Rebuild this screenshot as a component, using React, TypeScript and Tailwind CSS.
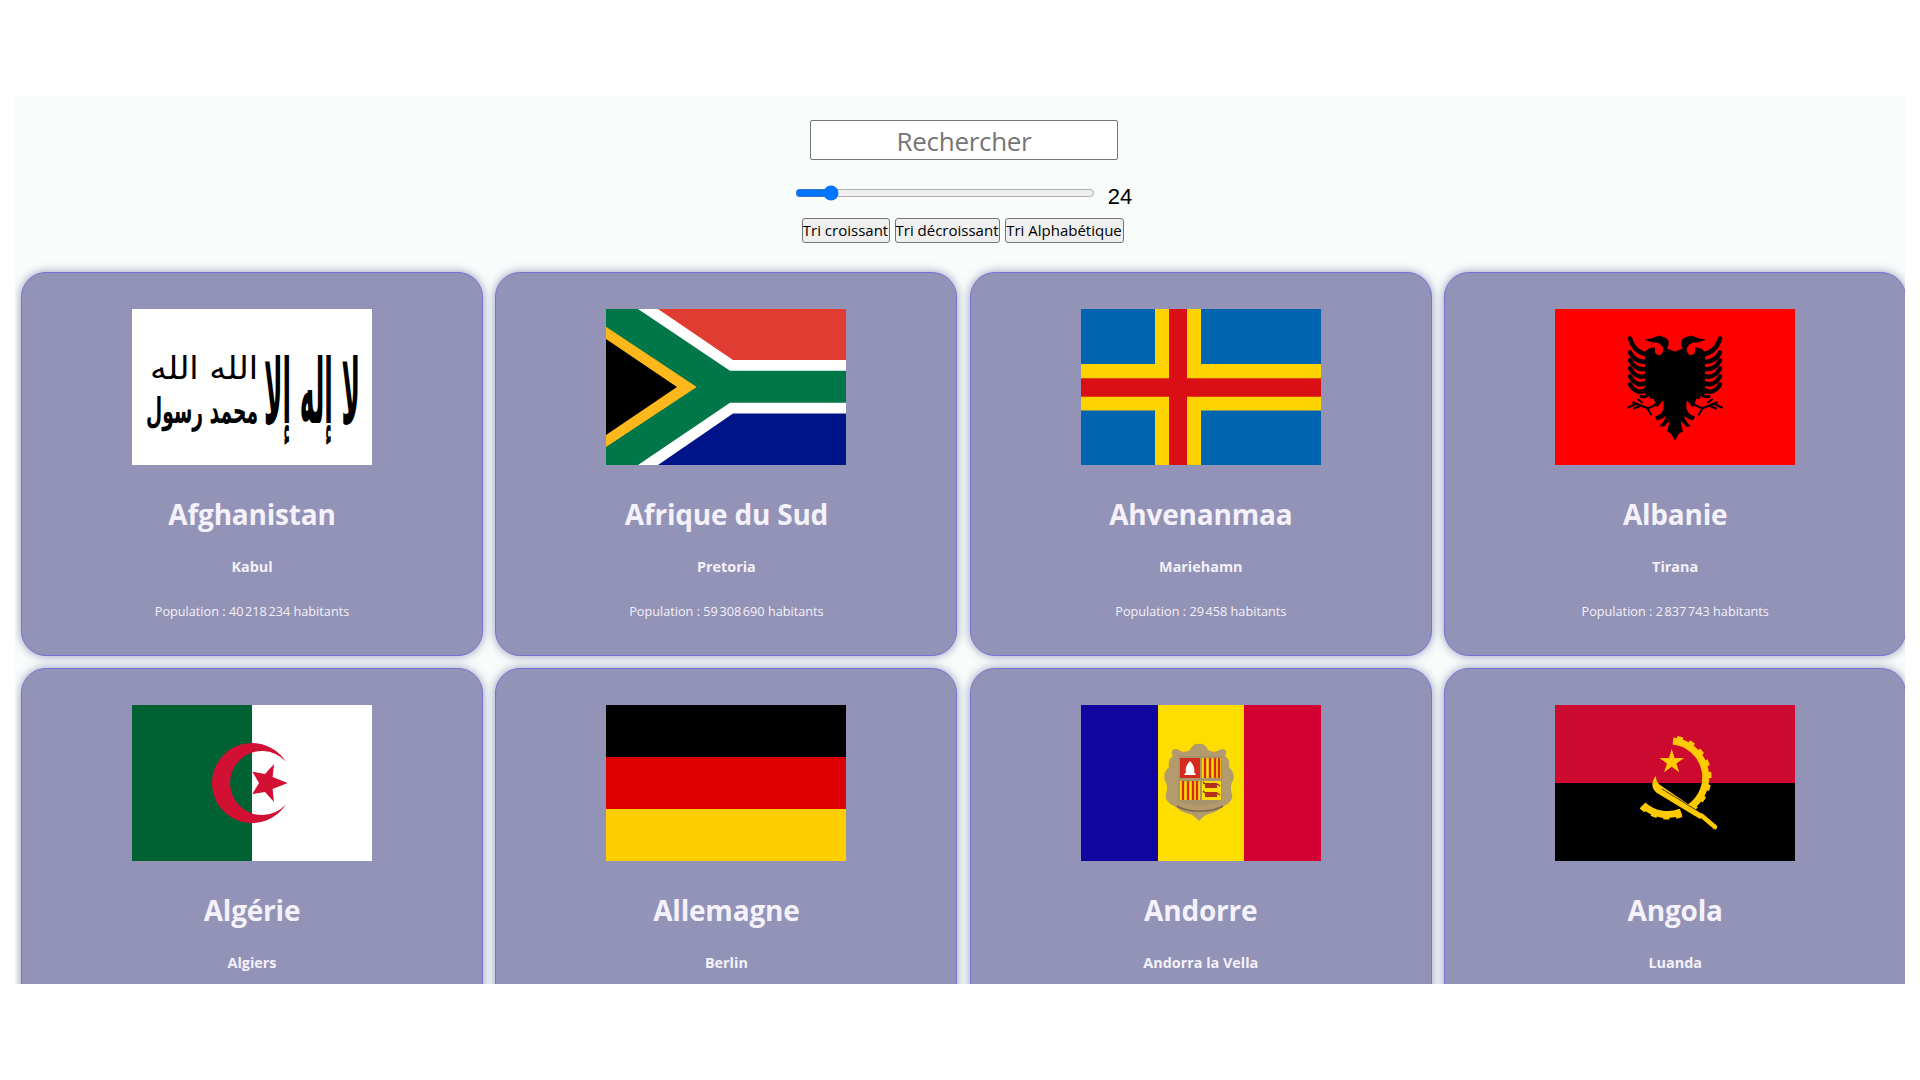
import { ReactNode } from 'react';

const FlagAfghanistan = () => (
  <svg viewBox="0 0 240 156" className="block w-full h-full">
    <rect width="240" height="156" fill="#fff" />
    <g fontFamily="'DejaVu Sans', sans-serif" fill="#000" textAnchor="middle">
      <g transform="translate(180 114) scale(1 3)">
        <text x="0" y="0" textLength="96" lengthAdjust="spacingAndGlyphs" fontWeight="700" fontSize="30">
          لا إله إلا
        </text>
      </g>
      <g transform="translate(72 70) scale(1 1.6)">
        <text x="0" y="0" textLength="108" lengthAdjust="spacingAndGlyphs" fontSize="20">
          الله الله
        </text>
      </g>
      <g transform="translate(70 114) scale(1 1.35)">
        <text x="0" y="0" textLength="112" lengthAdjust="spacingAndGlyphs" fontWeight="700" fontSize="26">
          محمد رسول
        </text>
      </g>
    </g>
  </svg>
);

const FlagSouthAfrica = () => (
  <svg viewBox="0 0 240 156" className="block w-full h-full">
    <rect width="240" height="78" fill="#e03c31" />
    <rect y="78" width="240" height="78" fill="#001489" />
    <polygon points="32,0 52,0 127,51 240,51 240,104.5 127,104.5 52,156 32,156" fill="#fff" />
    <polygon points="0,0 32,0 124,61.7 240,61.7 240,93.7 124,93.7 32,156 0,156" fill="#007749" />
    <polygon points="0,17.7 90.7,78 0,138" fill="#ffb81c" />
    <polygon points="0,30 71,78 0,126" fill="#000" />
  </svg>
);

const FlagAland = () => (
  <svg viewBox="0 0 240 156" className="block w-full h-full">
    <rect width="240" height="156" fill="#0064ae" />
    <rect x="74" width="46" height="156" fill="#ffd300" />
    <rect y="55" width="240" height="46.5" fill="#ffd300" />
    <rect x="88" width="18" height="156" fill="#da0e15" />
    <rect y="69.3" width="240" height="18.4" fill="#da0e15" />
  </svg>
);

// one half of the eagle, mirrored around x=0
const EagleHalf = () => (
  <g>
    <path d="M0 41 L8 38 C5 33 6 29 10 27 L16 25 L24 28 L31 29 L23 32 L18 32 C14 34 11 36 12 41 C13 45 17 46 20 42 L20 37 C24 37 28 38 30 42 L30 84 L22 87 L18 97 L12 90 C10 98 12 104 20 106 L18 110 C14 109 11 107 9 105 C10 110 13 113 16 116 L11 116 C9 114 7 112 6 110 C6 115 7 118 8 121 L4 123 L0 130 Z" fill="#000" />
    <path d="M27 44 C36 43 42 38 45 28" fill="none" stroke="#000" strokeWidth="4.5" strokeLinecap="round" />
    <path d="M28 51 C35 52 41 50 45 42" fill="none" stroke="#000" strokeWidth="4.5" strokeLinecap="round" />
    <path d="M28 58 C35 60 41 57 45 50" fill="none" stroke="#000" strokeWidth="4.5" strokeLinecap="round" />
    <path d="M28 65 C35 68 41 65 45 58" fill="none" stroke="#000" strokeWidth="4.5" strokeLinecap="round" />
    <path d="M28 72 C35 76 41 73 45 66" fill="none" stroke="#000" strokeWidth="4.5" strokeLinecap="round" />
    <path d="M28 78 C34 84 41 81 45 74" fill="none" stroke="#000" strokeWidth="4.5" strokeLinecap="round" />
    <path d="M25 81 C26 85 28 87 34 86" fill="none" stroke="#000" strokeWidth="3" strokeLinecap="round" />
    <path d="M17 79 C17 84 19 86 24 87" fill="none" stroke="#000" strokeWidth="3" strokeLinecap="round" />
    <path d="M17 93 L27 98 L42 92 M33 92 L37 89 M34 95 L41 98 M28 97 L24 104 M38 93 L47 97" fill="none" stroke="#000" strokeWidth="2" strokeLinecap="round" />
  </g>
);

const FlagAlbania = () => (
  <svg viewBox="0 0 240 156" className="block w-full h-full">
    <rect width="240" height="156" fill="#ff0000" />
    <g transform="translate(120 1.5)">
      <EagleHalf />
      <g transform="scale(-1 1)">
        <EagleHalf />
      </g>
    </g>
  </svg>
);

const FlagAlgeria = () => (
  <svg viewBox="0 0 240 156" className="block w-full h-full">
    <rect width="120" height="156" fill="#006233" />
    <rect x="120" width="120" height="156" fill="#fff" />
    <path d="M153.8 56.6 A40 40 0 1 0 153.8 99.4 A32 32 0 1 1 153.8 56.6 Z" fill="#d21034" />
    <polygon points="155.7,78 140.6,84 142,97 133,87 120.3,89 127,78 120.3,66.7 133,69 142,59 140.6,72" fill="#d21034" />
  </svg>
);

const FlagGermany = () => (
  <svg viewBox="0 0 240 156" className="block w-full h-full">
    <rect width="240" height="52" fill="#000" />
    <rect y="52" width="240" height="52" fill="#dd0000" />
    <rect y="104" width="240" height="52" fill="#ffce00" />
  </svg>
);

const FlagAndorra = () => (
  <svg viewBox="0 0 240 156" className="block w-full h-full">
    <rect width="77" height="156" fill="#10069f" />
    <rect x="77" width="86" height="156" fill="#fedd00" />
    <rect x="163" width="77" height="156" fill="#d50032" />
    {/* cartouche round the shield */}
    <path transform="translate(118 77) scale(1.07 1) translate(-118 -77)" d="M94 51 C90 46 95 42 99 45 C103 48 108 47 110 44 C112 40 115 38 118 39 C121 38 124 40 126 44 C128 47 133 48 137 45 C141 42 146 46 142 51 C146 53 147 58 146 62 C150 66 152 72 149 77 C147 81 148 86 149 90 C150 95 145 100 141 101 C137 105 131 108 127 109 C123 110 121 113 118 116 C115 113 113 110 109 109 C105 108 99 105 95 101 C91 100 86 95 87 90 C88 86 89 81 87 77 C84 72 86 66 90 62 C89 58 90 53 94 51 Z" fill="#b39b6d" />
    <path d="M97 51 H141 V92 C141 97 135 99 130 99 L119 102 L107 99 C102 99 97 97 97 92 Z" fill="#a8946a" />
    <rect x="99" y="53" width="20" height="20" fill="#d52b1e" />
    <path d="M109 56 C105 60 104 65 105 67 L103 70 H115 L113 67 C114 65 113 60 109 56 Z" fill="#fff" />
    <rect x="121" y="53" width="19" height="20" fill="#fedd00" />
    <path d="M124 53 V73 M129 53 V73 M134 53 V73 M138 53 V73" stroke="#d52b1e" strokeWidth="2.4" />
    <rect x="99" y="76" width="20" height="19" fill="#fedd00" />
    <path d="M102 76 V95 M107 76 V95 M112 76 V95 M116 76 V95" stroke="#d52b1e" strokeWidth="2.4" />
    <rect x="121" y="76" width="19" height="19" fill="#fedd00" />
    <rect x="124" y="78" width="12" height="5" fill="#b5301f" />
    <rect x="124" y="87" width="12" height="5" fill="#b5301f" />
    <path d="M122 77 L124 79 M136 79 L139 81 M122 86 L124 88 M136 88 L139 90" stroke="#7a3a20" strokeWidth="1.4" />
    <path d="M96 101 C106 108 131 108 142 101" fill="none" stroke="#7d6c4c" strokeWidth="1.6" />
  </svg>
);

const FlagAngola = () => (
  <svg viewBox="0 0 240 156" className="block w-full h-full">
    <rect width="240" height="78" fill="#cc092f" />
    <rect y="78" width="240" height="78" fill="#000" />
    <path d="M118 36 A36.5 36.5 0 0 1 134 103" fill="none" stroke="#ffcb00" strokeWidth="7" />
    <path d="M122 33 A39.5 39.5 0 0 1 134 106.5" fill="none" stroke="#ffcb00" strokeWidth="4" strokeDasharray="6 6.5" />
    <path d="M88 100 A36.5 36.5 0 0 0 126 107" fill="none" stroke="#ffcb00" strokeWidth="7" />
    <path d="M86 102 A39.5 39.5 0 0 0 127 110" fill="none" stroke="#ffcb00" strokeWidth="4" strokeDasharray="6 6.5" />
    <polygon points="116.7,44 119.6,52.9 129,52.9 121.4,58.4 124.3,67.3 116.7,61.8 109.1,67.3 112,58.4 104.4,52.9 114,52.9" fill="#ffcb00" />
    <path d="M101 71 C96 76 96 84 102 88 L145 114 L149 110 L108 82 C103 79 101 76 101 71 Z" fill="#ffcb00" />
    <path d="M107 84 L146 108" stroke="#000" strokeWidth="0.7" />
    <path d="M147 111 L160 122" stroke="#ffcb00" strokeWidth="4.5" strokeLinecap="round" />
  </svg>
);

interface Country {
  name: string;
  capital: string;
  population: string;
  flag: ReactNode;
}

const countries: Country[] = [
  { name: 'Afghanistan', capital: 'Kabul', population: '40\u202f218\u202f234', flag: <FlagAfghanistan /> },
  { name: 'Afrique du Sud', capital: 'Pretoria', population: '59\u202f308\u202f690', flag: <FlagSouthAfrica /> },
  { name: 'Ahvenanmaa', capital: 'Mariehamn', population: '29\u202f458', flag: <FlagAland /> },
  { name: 'Albanie', capital: 'Tirana', population: '2\u202f837\u202f743', flag: <FlagAlbania /> },
  { name: 'Algérie', capital: 'Algiers', population: '44\u202f700\u202f000', flag: <FlagAlgeria /> },
  { name: 'Allemagne', capital: 'Berlin', population: '83\u202f240\u202f525', flag: <FlagGermany /> },
  { name: 'Andorre', capital: 'Andorra la Vella', population: '77\u202f265', flag: <FlagAndorra /> },
  { name: 'Angola', capital: 'Luanda', population: '32\u202f866\u202f268', flag: <FlagAngola /> },
];

function Card({ country }: { country: Country }) {
  return (
    <li className="flex h-[384px] flex-col items-center rounded-[25px] border border-[#7474d6] bg-[#9293b6] pt-[36px] text-[#f5f1fb] shadow-[0_0_10px_rgba(70,70,130,0.55)]">
      <div className="h-[156px] w-[240px]">{country.flag}</div>
      <h2 className="mt-[30px] text-[28px] leading-[38px] font-bold tracking-[-0.2px]">{country.name}</h2>
      <h3 className="mt-[23px] text-[14.4px] leading-[22px] font-bold">{country.capital}</h3>
      <p className="mt-[23px] text-[12.7px] leading-[20px]">Population : {country.population} habitants</p>
    </li>
  );
}

export default function App() {
  return (
    <div className="min-h-[1080px] bg-white px-[15px] pt-[96px] font-['Open_Sans',sans-serif]">
      <div className="h-[888px] overflow-hidden bg-[#f8fcfb]">
        <div className="flex flex-col items-center pt-[24px] pl-[7px]">
          <input
            type="text"
            placeholder="Rechercher"
            className="ml-[1px] h-[40px] w-[308px] rounded-[2px] border border-[#767676] bg-white pt-[1px] text-center text-[26px] tracking-[-0.3px] placeholder:text-[#757575]"
          />
          <div className="mt-[25px] flex h-[16px] items-center">
            <input type="range" min={1} max={230} defaultValue={24} className="h-[16px] w-[300px] accent-[#0075ff]" />
            <span className="relative top-[4px] ml-[13px] font-['Liberation_Sans',sans-serif] text-[22px] leading-[24px] text-black">24</span>
          </div>
          <div className="mt-[17px] -ml-[2px] flex gap-[5px]">
            <button className="h-[25px] w-[88px] rounded-[3px] border border-[#767676] bg-[#efefef] text-[15px] leading-none text-black">Tri croissant</button>
            <button className="h-[25px] w-[105px] rounded-[3px] border border-[#767676] bg-[#efefef] text-[15px] leading-none text-black">Tri décroissant</button>
            <button className="h-[25px] w-[119px] rounded-[3px] border border-[#767676] bg-[#efefef] text-[15px] leading-none text-black">Tri Alphabétique</button>
          </div>
        </div>
        <ul className="mt-[29px] ml-[6px] grid grid-cols-[repeat(4,462px)] gap-x-[12.4px] gap-y-[12px]">
          {countries.map((country) => (
            <Card key={country.name} country={country} />
          ))}
        </ul>
      </div>
    </div>
  );
}
